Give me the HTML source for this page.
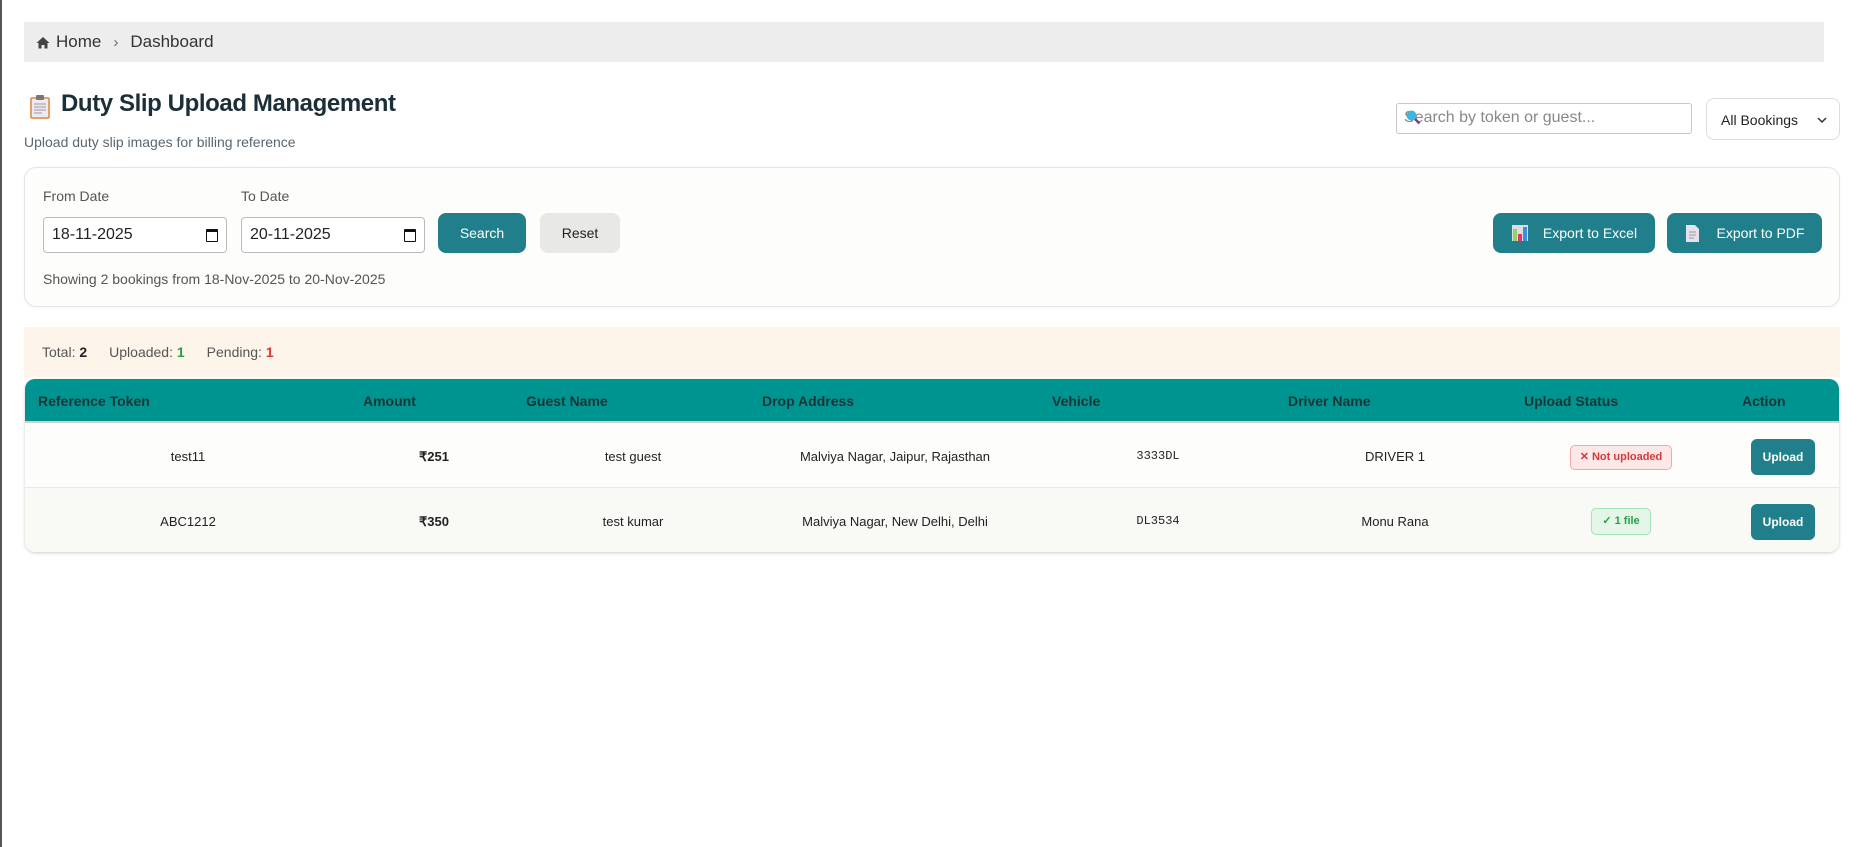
<!DOCTYPE html>
<html><head><meta charset="utf-8"><style>
*{box-sizing:border-box;margin:0;padding:0}
body{width:1858px;height:847px;background:#fff;font-family:"Liberation Sans",sans-serif;position:relative;overflow:hidden}
.a{position:absolute}
.bc{left:24px;top:22px;width:1800px;height:40px;background:#ededed;font-size:17px;color:#333;display:flex;align-items:center;padding-left:12px}
.title{left:61px;top:90px;font-size:24px;font-weight:bold;color:#1c2e38;letter-spacing:-0.4px}
.sub{left:24px;top:134px;font-size:14px;color:#5a6670}
.card{left:24px;top:167px;width:1816px;height:140px;border:1px solid #e4e4e4;border-radius:12px;background:#fdfdfb;box-shadow:0 1px 3px rgba(0,0,0,.04)}
.lbl{font-size:14px;color:#555}
.inp{height:36px;border:1px solid #bbb;border-radius:4px;background:#fff;font-size:16px;color:#222;padding-left:8px;display:flex;align-items:center}
.cal{position:absolute;right:8px;top:11px;width:12px;height:13px;border:1.5px solid #111;border-top-width:3px;border-radius:1px}
.btn{background:#207f8a;color:#fff;border-radius:8px;display:flex;align-items:center;justify-content:center;font-size:14px}
.stats{left:24px;top:327px;width:1816px;height:50px;background:#fdf5ea;font-size:14px;color:#555;display:flex;align-items:center;padding-left:18px}
.tbl{left:25px;top:379px;width:1814px;height:173px;border-radius:10px;box-shadow:0 1px 3px rgba(0,0,0,.2);overflow:hidden;background:#fdfdfb}
.th{height:44px;background:#009490;border-bottom:2px solid #d0d0d0;position:relative}
.th span{position:absolute;top:14px;font-size:14px;font-weight:bold;color:#1b3536}
.c{position:absolute;transform:translateX(-50%);font-size:13px;color:#222;white-space:nowrap}
.up{position:absolute;width:64px;height:36px;background:#207f8a;color:#fff;border-radius:6px;font-size:12px;font-weight:bold;display:flex;align-items:center;justify-content:center}
</style></head><body>
<div class="a" style="left:0;top:0;width:2px;height:847px;background:#555"></div>
<div class="a bc"><svg width="14" height="13" viewBox="0 0 14 13" style="margin-right:6px"><path d="M7 1L0.5 7H2.5V12.5H5.5V9H8.5V12.5H11.5V7H13.5Z" fill="#444"/></svg>Home<span style="margin:0 12px;color:#666;font-size:15px">›</span>Dashboard</div>

<svg class="a" style="left:29px;top:94px" width="22" height="26" viewBox="0 0 22 26"><rect x="1" y="3" width="20" height="22" rx="2" fill="#e3a06a"/><rect x="3" y="5" width="16" height="18" fill="#eeeaf2"/><rect x="7" y="1" width="8" height="5" rx="1" fill="#777"/><path d="M5 10h12M5 13h12M5 16h12M5 19h8" stroke="#999" stroke-width="1"/></svg>
<div class="a title">Duty Slip Upload Management</div>
<div class="a sub">Upload duty slip images for billing reference</div>

<div class="a" style="left:1396px;top:103px;width:296px;height:31px;border:1px solid #c8c8c8;border-radius:3px;font-size:16px;color:#888;padding:5px 0 0 7px">Search by token or guest...</div>
<svg class="a" style="left:1405px;top:109px" width="16" height="16" viewBox="0 0 16 16"><circle cx="6.5" cy="6.5" r="5" fill="#3fb6e0"/><path d="M10 10l4.5 4.5" stroke="#7a3f8e" stroke-width="2.5"/></svg>
<div class="a" style="left:1706px;top:98px;width:134px;height:42px;border:1px solid #ddd;border-radius:8px;font-size:14px;color:#222;padding:13px 0 0 14px">All Bookings<svg style="position:absolute;right:12px;top:18px" width="10" height="6" viewBox="0 0 10 6"><path d="M1 1l4 4 4-4" stroke="#333" stroke-width="1.5" fill="none"/></svg></div>

<div class="a card"></div>
<div class="a lbl" style="left:43px;top:188px">From Date</div>
<div class="a lbl" style="left:241px;top:188px">To Date</div>
<div class="a inp" style="left:43px;top:217px;width:184px">18-11-2025<span class="cal"></span></div>
<div class="a inp" style="left:241px;top:217px;width:184px">20-11-2025<span class="cal"></span></div>
<div class="a btn" style="left:438px;top:213px;width:88px;height:40px">Search</div>
<div class="a btn" style="left:540px;top:213px;width:80px;height:40px;background:#e8e8e6;color:#222">Reset</div>
<div class="a lbl" style="left:43px;top:271px">Showing 2 bookings from 18-Nov-2025 to 20-Nov-2025</div>
<div class="a btn" style="left:1493px;top:213px;width:162px;height:40px"><svg width="18" height="18" viewBox="0 0 18 18" style="margin-right:14px"><rect x="1" y="1" width="16" height="16" fill="#ddd"/><rect x="2" y="5" width="4" height="12" fill="#8fd36a"/><rect x="7" y="10" width="4" height="7" fill="#e0356a"/><rect x="12" y="3" width="4" height="14" fill="#3a8fe0"/></svg>Export to Excel</div>
<div class="a btn" style="left:1667px;top:213px;width:155px;height:40px"><svg width="15" height="19" viewBox="0 0 15 19" style="margin-right:17px"><path d="M1 1h9l4 4v13H1z" fill="#e6e0ee"/><path d="M4 8h7M4 11h7M4 14h5" stroke="#999"/></svg>Export to PDF</div>

<div class="a stats">Total:&nbsp;<b style="color:#222">2</b><span style="margin-left:22px">Uploaded:&nbsp;<b style="color:#2a9d4a">1</b></span><span style="margin-left:22px">Pending:&nbsp;<b style="color:#d33">1</b></span></div>

<div class="a tbl">
<div class="th"><span style="left:13px">Reference Token</span><span style="left:338px">Amount</span><span style="left:501px">Guest Name</span><span style="left:737px">Drop Address</span><span style="left:1027px">Vehicle</span><span style="left:1263px">Driver Name</span><span style="left:1499px">Upload Status</span><span style="left:1717px">Action</span></div>
<div style="position:relative;height:65px;border-bottom:1px solid #e8e8e8;background:#fdfdfb">
<span class="c" style="left:163px;top:26px">test11</span><span class="c" style="left:409px;top:26px;font-weight:bold">₹251</span><span class="c" style="left:608px;top:26px">test guest</span><span class="c" style="left:870px;top:26px">Malviya Nagar, Jaipur, Rajasthan</span><span class="c" style="left:1133px;top:26px;font-family:'Liberation Mono',monospace;font-size:12px">3333DL</span><span class="c" style="left:1370px;top:26px">DRIVER 1</span>
<span class="c" style="left:1596px;top:22px;height:25px;width:102px;background:#fde7e7;border:1px solid #f2a8a8;border-radius:5px;color:#d43a3a;font-size:11px;font-weight:bold;text-align:center;line-height:23px">✕ Not uploaded</span>
<div class="up" style="left:1726px;top:16px">Upload</div></div>
<div style="position:relative;height:64px;background:#f9f9f6">
<span class="c" style="left:163px;top:26px">ABC1212</span><span class="c" style="left:409px;top:26px;font-weight:bold">₹350</span><span class="c" style="left:608px;top:26px">test kumar</span><span class="c" style="left:870px;top:26px">Malviya Nagar, New Delhi, Delhi</span><span class="c" style="left:1133px;top:26px;font-family:'Liberation Mono',monospace;font-size:12px">DL3534</span><span class="c" style="left:1370px;top:26px">Monu Rana</span>
<span class="c" style="left:1596px;top:20px;height:27px;width:60px;background:#e3f6e8;border:1px solid #a6e3b5;border-radius:5px;color:#2aa04a;font-size:11px;font-weight:bold;text-align:center;line-height:25px">✓ 1 file</span>
<div class="up" style="left:1726px;top:16px">Upload</div></div>
</div>
</body></html>
